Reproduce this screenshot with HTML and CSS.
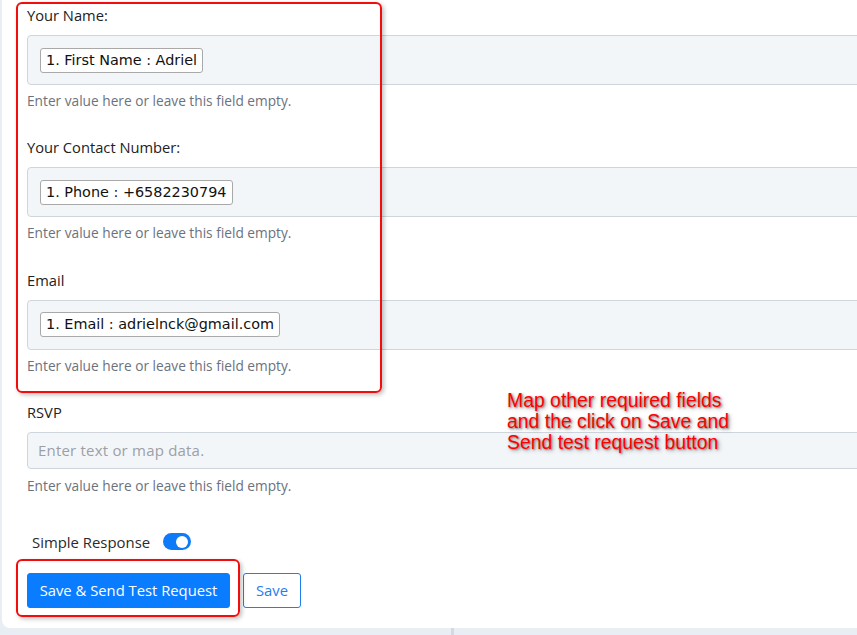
FILE: index.html
```html
<!DOCTYPE html>
<html lang="en">
  <head>
    <meta charset="UTF-8" />
    <meta name="viewport" content="width=device-width, initial-scale=1.0" />
    <title>Webhook mapping</title>
    <link rel="stylesheet" href="styles.css">
  </head>
  <body>
    <div class="page">
      <div class="card">
        <div class="field">
          <label class="field-label">Your Name:</label>
          <div class="map-input">
            <span class="chip">1. First Name : Adriel</span>
          </div>
          <p class="hint">Enter value here or leave this field empty.</p>
        </div>
        <div class="field">
          <label class="field-label">Your Contact Number:</label>
          <div class="map-input">
            <span class="chip">1. Phone : +6582230794</span>
          </div>
          <p class="hint">Enter value here or leave this field empty.</p>
        </div>
        <div class="field">
          <label class="field-label">Email</label>
          <div class="map-input">
            <span class="chip">1. Email : adrielnck@gmail.com</span>
          </div>
          <p class="hint">Enter value here or leave this field empty.</p>
        </div>
        <div class="field field-plain">
          <label class="field-label">RSVP</label>
          <div class="map-input text-input">
            <span class="placeholder">Enter text or map data.</span>
          </div>
          <p class="hint">Enter value here or leave this field empty.</p>
        </div>

        <div class="toggle-row">
          <span>Simple Response</span>
          <span class="switch"><span class="knob"></span></span>
        </div>

        <div class="actions">
          <button class="btn btn-primary">Save &amp; Send Test Request</button>
          <button class="btn btn-outline">Save</button>
        </div>

        <!-- callouts drawn over the form -->
        <div class="mark mark-fields"></div>
        <div class="mark mark-button"></div>
        <div class="note">Map other required fields<br>and the click on Save and<br>Send test request button</div>
      </div>
      <div class="footer-strip">
        <div class="strip-cell"></div>
        <div class="strip-cell"></div>
      </div>
    </div>
  </body>
</html>
```

FILE: styles.css
```css
* {
  margin: 0;
  padding: 0;
  box-sizing: border-box;
}
body {
  background-color: #e9edf4;
  font-family: "Open Sans", "Noto Sans", sans-serif;
  color: #2b2b2b;
  overflow: hidden;
  width: 857px;
  height: 635px;
}
.page {
  display: flex;
  flex-direction: column;
  padding-left: 2px;
}
.card {
  position: relative;
  width: 900px;
  background-color: #fff;
  border-bottom-left-radius: 8px;
  padding: 5px 0 20px 25px;
}
.field {
  display: flex;
  flex-direction: column;
  margin-bottom: 27.3px;
}
.field-plain {
  margin-bottom: 37px;
}
.field-label {
  font-size: 14.7px;
  line-height: 20px;
  margin-bottom: 10px;
  color: #222;
}
.map-input {
  display: flex;
  align-items: center;
  height: 50px;
  width: 860px;
  padding-left: 12px;
  background-color: #f3f6f9;
  border: 1px solid #cfd5dc;
  border-radius: 4px 0 0 4px;
}
.text-input {
  height: 37px;
  padding-left: 10px;
}
.chip {
  height: 25px;
  line-height: 23px;
  padding: 0 5px;
  background-color: #fff;
  border: 1px solid #a9a9a9;
  border-radius: 3px;
  font-family: "DejaVu Sans", sans-serif;
  font-size: 14.4px;
  color: #111;
}
.placeholder {
  font-size: 15px;
  color: #9ca0a6;
  letter-spacing: 0.2px;
}
.hint {
  margin-top: 7px;
  font-size: 13.7px;
  line-height: 18px;
  color: #6b727d;
}
.text-input + .hint {
  margin-top: 8px;
}
.toggle-row {
  display: flex;
  align-items: center;
  gap: 13px;
  padding-left: 5px;
  font-size: 14.9px;
  height: 20px;
}
.switch {
  display: flex;
  justify-content: flex-end;
  align-items: center;
  width: 28px;
  height: 17px;
  padding: 2px 3px;
  border-radius: 9px;
  background-color: #0d7bf7;
}
.knob {
  width: 12px;
  height: 12px;
  border-radius: 50%;
  background-color: #fff;
}
.actions {
  display: flex;
  gap: 13px;
  margin-top: 21px;
}
.btn {
  height: 35px;
  font-family: "Open Sans", sans-serif;
  font-size: 14.8px;
  border-radius: 3px;
  cursor: pointer;
}
.btn-primary {
  width: 203px;
  background-color: #0a7cff;
  border: 1px solid #0a7cff;
  color: #fff;
}
.btn-outline {
  width: 58px;
  background-color: #fff;
  border: 1px solid #1f7ef0;
  color: #1f7ef0;
}
.mark {
  position: absolute;
  border: 2px solid #f20d0d;
  border-radius: 6px;
  box-shadow: 2px 2px 4px rgba(0, 0, 0, 0.25);
}
.mark-fields {
  left: 14px;
  top: 2px;
  width: 366px;
  height: 391px;
}
.mark-button {
  left: 14px;
  top: 559px;
  width: 224px;
  height: 58px;
}
.note {
  position: absolute;
  left: 505px;
  top: 390px;
  font-family: "Liberation Sans", Arial, sans-serif;
  font-size: 19.4px;
  line-height: 21px;
  color: #ff0000;
  text-shadow: 1px 1px 2px rgba(0, 0, 0, 0.45), 2px 2px 4px rgba(0, 0, 0, 0.3);
}
.footer-strip {
  display: flex;
  height: 7px;
}
.strip-cell {
  width: 452px;
  border-right: 3px solid #d5dae2;
}
.strip-cell:last-child {
  flex: 1;
  border-right: none;
}
```
